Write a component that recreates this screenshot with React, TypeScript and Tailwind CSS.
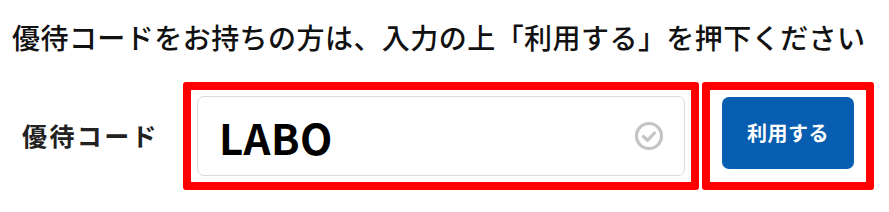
import React, { useState } from 'react';

function CheckCircle() {
  return (
    <svg width="30" height="30" viewBox="0 0 30 30" fill="none">
      <circle cx="15" cy="15" r="12.5" stroke="#c4c4c4" strokeWidth="3.2" />
      <path d="M9.5 15.5l4 3.8 7-7.3" stroke="#c4c4c4" strokeWidth="3.2" strokeLinecap="round" strokeLinejoin="round" />
    </svg>
  );
}

function App() {
  const [code, setCode] = useState('LABO');

  return (
    <div
      className="w-[889px] h-[212px] bg-white text-[#111] overflow-hidden"
      style={{ fontFamily: '"Noto Sans CJK JP", "Noto Sans", sans-serif' }}
    >
      <p className="pl-[12px] pt-[17px] text-[28px] leading-[40px] tracking-[0.45px] font-medium">
        優待コードをお持ちの方は、入力の上「利用する」を押下ください
      </p>

      <div className="flex items-center mt-[25px]">
        <label htmlFor="code" className="w-[183px] pl-[22px] text-[25px] font-bold tracking-[2.4px] text-[#222]">
          優待コード
        </label>

        <div className="border-[8px] border-[#ff0000] rounded-[3px] p-[6px]">
          <div className="flex items-center w-[488px] h-[80px] border border-[#dcdcdc] rounded-[7px] pl-[21px] pr-[20px]">
            <input
              id="code"
              value={code}
              onChange={(e) => setCode(e.target.value)}
              className="flex-1 min-w-0 outline-none bg-transparent text-[42px] font-bold tracking-[0.5px] text-black"
            />
            <CheckCircle />
          </div>
        </div>

        <div className="ml-[3px] self-stretch border-[8px] border-[#ff0000] rounded-[3px] px-[12px] pt-[7px]">
          <button className="w-[132px] h-[72px] rounded-[7px] bg-[#075db0] text-white text-[20px] font-bold tracking-[0.5px]">
            利用する
          </button>
        </div>
      </div>
    </div>
  );
}

export default App;
